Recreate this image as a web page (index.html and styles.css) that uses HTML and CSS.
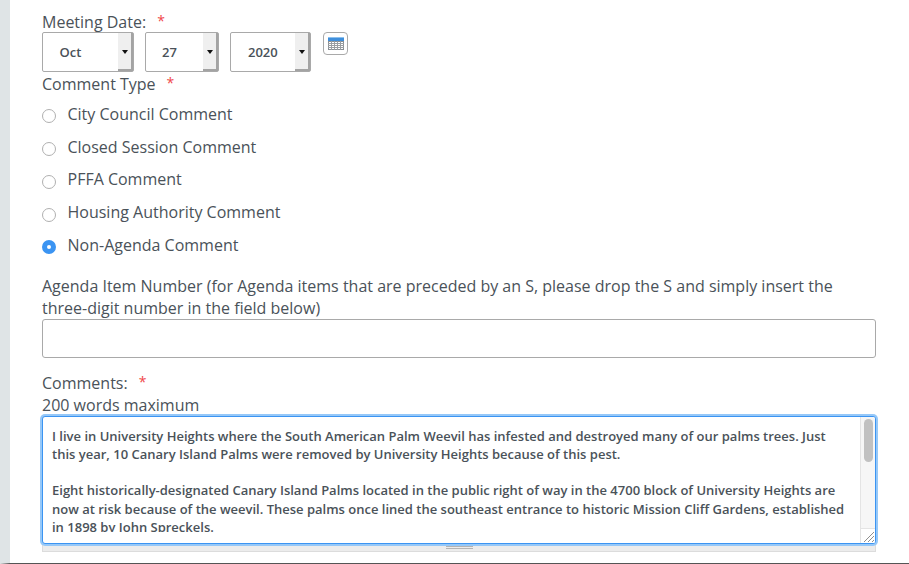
FILE: index.html
```html
<!DOCTYPE html>
<html lang="en">
<head>
<meta charset="utf-8">
<title>Comment Form</title>
<link rel="stylesheet" href="styles.css">
</head>
<body>
<main class="page">
  <form class="form">
    <div class="label date-label">Meeting Date:<span class="req">*</span></div>
    <div class="date-row">
      <div class="select sel-month"><span class="val">Oct</span><span class="arrow"><i></i></span></div>
      <div class="select sel-day"><span class="val">27</span><span class="arrow"><i></i></span></div>
      <div class="select sel-year"><span class="val">2020</span><span class="arrow"><i></i></span></div>
      <button type="button" class="cal">
        <svg width="16" height="13" viewBox="0 0 16 13">
          <rect x="0" y="0" width="16" height="13" fill="#8a8f94"/>
          <rect x="0" y="0" width="16" height="4" fill="#3f8fdc"/>
          <rect x="0" y="0" width="16" height="1" fill="#8cc0ee"/>
          <path d="M1 5h14v7H1z" fill="#fff"/>
          <path d="M3.5 4v9M6.5 4v9M9.5 4v9M12.5 4v9M0 6.5h16M0 8.5h16M0 10.5h16" stroke="#9a9ea2" stroke-width="1" fill="none"/>
        </svg>
      </button>
    </div>
    <div class="label type-label">Comment Type<span class="req">*</span></div>
    <div class="radios">
      <label class="radio"><input type="radio" name="t">City Council Comment</label>
      <label class="radio"><input type="radio" name="t">Closed Session Comment</label>
      <label class="radio"><input type="radio" name="t">PFFA Comment</label>
      <label class="radio"><input type="radio" name="t">Housing Authority Comment</label>
      <label class="radio"><input type="radio" name="t" checked>Non-Agenda Comment</label>
    </div>
    <div class="label item-label">Agenda Item Number (for Agenda items that are preceded by an S, please drop the S and simply insert the three-digit number in the field below)</div>
    <input class="text" type="text">
    <div class="label comments-label">Comments:<span class="req">*</span></div>
    <div class="label words-label">200 words maximum</div>
    <div class="area-wrap">
      <div class="area">
        <div class="area-text">
          <p>I live in University Heights where the South American Palm Weevil has infested and destroyed many of our palms trees. Just this year, 10 Canary Island Palms were removed by University Heights because of this pest.</p>
          <p>Eight historically-designated Canary Island Palms located in the public right of way in the 4700 block of University Heights are now at risk because of the weevil. These palms once lined the southeast entrance to historic Mission Cliff Gardens, established in 1898 by John Spreckels.</p>
        </div>
        <div class="scroll">
          <div class="track"><div class="thumb"></div></div>
          <div class="corner">
            <svg width="14" height="14" viewBox="0 0 14 14"><path d="M3 13L13 3M7 13L13 7M11 13L13 11" stroke="#8f8f8f" stroke-width="1" fill="none"/></svg>
          </div>
        </div>
      </div>
      <div class="grip"><i></i><i></i></div>
    </div>
  </form>
</main>
</body>
</html>
```
FILE: styles.css
```css
* { box-sizing: border-box; }
html, body { margin: 0; height: 564px; overflow: hidden; background: #fff; }
body { font-family: "Open Sans", "Liberation Sans", sans-serif; color: #4a5259; }
.page {
  height: 564px;
  padding: 0 33px 0 32px;
  margin: 0;
  border-left: 10px solid #dfe4e6;
  border-bottom: 1px solid #555;
  overflow: hidden;
}
.form { display: flex; flex-direction: column; }
.label { font-size: 16px; line-height: 22px; }
.req { color: #f0474a; font-size: 14px; margin-left: 11px; position: relative; top: -2px; }
.date-label { margin-top: 11px; height: 21px; }
.date-row { display: flex; align-items: flex-start; height: 40px; }
.select {
  height: 40px;
  display: flex;
  justify-content: space-between;
  background: #fff;
  border: 1px solid #a9a9a9;
  border-radius: 2px;
  font-size: 13px;
  font-weight: 600;
  line-height: 38px;
}
.sel-month { width: 92px; margin-right: 11px; }
.sel-day { width: 74px; margin-right: 11px; }
.sel-year { width: 81px; margin-right: 12px; }
.val { padding-left: 16.5px; }
.sel-day .val { padding-left: 16px; }
.sel-year .val { padding-left: 17px; }
.arrow {
  width: 15px;
  background: #efefef;
  border-right: 2px solid #a3a3a3;
  border-bottom: 2px solid #a3a3a3;
  display: flex;
  align-items: center;
  justify-content: center;
}
.arrow i {
  width: 0; height: 0;
  margin-top: 2px;
  border-left: 3px solid transparent;
  border-right: 3px solid transparent;
  border-top: 4px solid #111;
}
.cal {
  width: 25px;
  height: 23px;
  padding: 0;
  margin-top: 0;
  background: #fff;
  border: 1px solid #a9a9a9;
  border-radius: 4px;
  display: flex;
  align-items: center;
  justify-content: center;
}
.type-label { margin-top: 1px; height: 22px; }
.radios { display: flex; flex-direction: column; margin-top: 2.6px; }
.radio {
  display: flex;
  align-items: center;
  height: 32.75px;
  font-size: 16px;
  line-height: 22px;
}
.radio input {
  appearance: none;
  width: 14px;
  height: 14px;
  margin: 5px 11.5px 0 0;
  flex: none;
  border: 1px solid #b0b0b0;
  border-radius: 50%;
  background: #fff;
}
.radio input:checked {
  border: 5px solid #3b94f2;
  background: #fff;
}
.item-label { margin-top: 13.4px; width: 834px; }
.text {
  display: block;
  width: 834px;
  height: 39px;
  margin-top: 0;
  border: 1px solid #a9a9a9;
  border-radius: 3px;
  background: #fff;
}
.comments-label { margin-top: 14px; height: 22px; }
.words-label { height: 22px; }
.area-wrap { width: 834px; margin-top: 0; position: relative; }
.area {
  display: flex;
  height: 128px;
  background: #fff;
  border: 1px solid #3b94f2;
  border-radius: 3px;
  box-shadow: 0 0 0 2px #96c8f8;
  position: relative;
  z-index: 1;
  overflow: hidden;
}
.area-text {
  flex: 1;
  padding: 10px 10px 0 9px;
  height: 115px;
  overflow: hidden;
  font-size: 13px;
  font-weight: 600;
  line-height: 18.2px;
}
.area-text p { margin: 0 0 18.2px; }
.scroll {
  width: 15px;
  flex: none;
  display: flex;
  flex-direction: column;
  background: #f6f6f6;
  border-left: 1px solid #e4e4e4;
}
.track { flex: 1; padding: 2px 2px; }
.thumb { width: 9px; height: 43px; margin-left: 1px; border-radius: 5px; background: #c1c1c1; }
.corner { height: 15px; background: #fff; border-top: 1px solid #e4e4e4; display: flex; }
.grip {
  height: 8px;
  background: #ececec;
  border: 1px solid #dcdcdc;
  border-top: 0;
  display: flex;
  flex-direction: column;
  align-items: center;
  gap: 1px;
  padding-top: 2px;
}
.grip i { display: block; width: 27px; height: 1px; background: #b4b4b4; }
```
